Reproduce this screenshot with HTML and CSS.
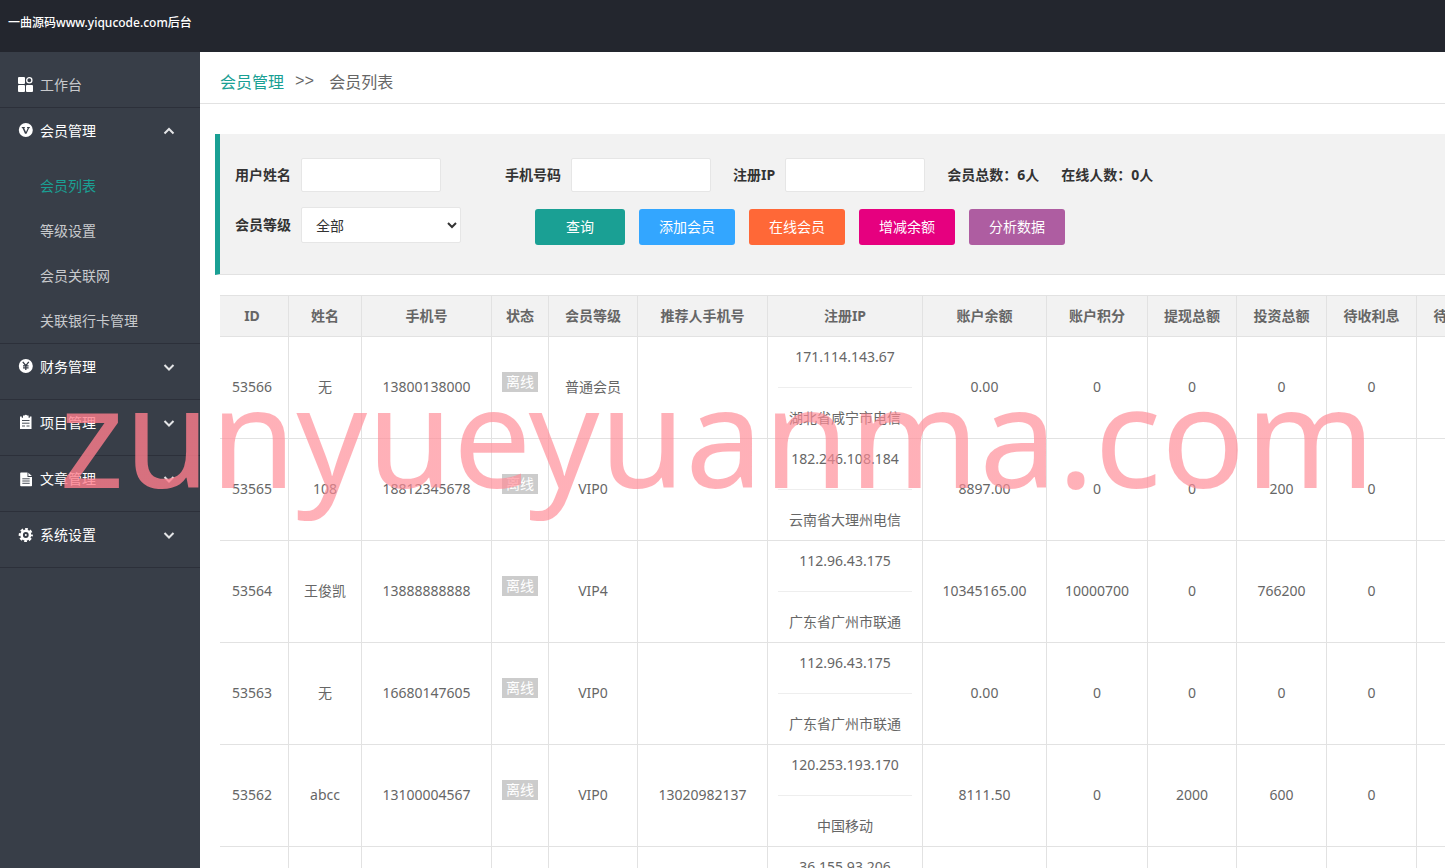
FILE: index.html
```html
<!DOCTYPE html>
<html lang="zh-CN">
<head>
<meta charset="utf-8">
<title>会员列表</title>
<link rel="stylesheet" href="styles.css">
</head>
<body>
<div class="app">
  <header class="topbar">一曲源码www.yiqucode.com后台</header>
  <div class="body">
    <nav class="sidebar">
      <div class="nav-group">
        <a class="nav-link" href="#">
          <svg class="icon raised" viewBox="0 0 16 16"><rect x="0" y="1" width="7" height="7" rx="1"/><rect x="0" y="9" width="7" height="7" rx="1"/><rect x="8" y="9" width="7" height="7" rx="1"/><circle cx="11.3" cy="4.2" r="2.6" fill="none" stroke="currentColor" stroke-width="1.3"/></svg>
          <span>工作台</span>
        </a>
      </div>
      <div class="nav-group nav-parent">
        <button class="nav-link" type="button" aria-expanded="true">
          <svg class="icon raised" viewBox="0 0 16 16"><circle cx="7.8" cy="8" r="7"/><path d="M3.800 5h3v1l-.6.200 1.800 3.800 1.700-3.800-.6-.2V5h2.700v1l-.8.300L8.500 11.800H7L4.600 6.200 3.800 6z" fill="#383e48"/></svg>
          <span>会员管理</span>
          <svg class="chevron" viewBox="0 0 12 12"><path d="M1.500 8.500 6 4l4.500 4.500"/></svg>
        </button>
        <ul class="subnav">
          <li><a class="active" href="#">会员列表</a></li>
          <li><a href="#">等级设置</a></li>
          <li><a href="#">会员关联网</a></li>
          <li><a href="#">关联银行卡管理</a></li>
        </ul>
      </div>
      <div class="nav-group nav-parent">
        <button class="nav-link" type="button" aria-expanded="false">
          <svg class="icon raised" viewBox="0 0 16 16"><circle cx="7.800" cy="8" r="7"/><path d="M4.800 3.800 7.800 7.600l3-3.800M7.800 7.600V12M5 7.800h5.600M5 9.900h5.600" fill="none" stroke="#383e48" stroke-width="1.300"/></svg>
          <span>财务管理</span>
          <svg class="chevron" viewBox="0 0 12 12"><path d="M1.500 4 6 8.500 10.500 4"/></svg>
        </button>
      </div>
      <div class="nav-group nav-parent">
        <button class="nav-link" type="button" aria-expanded="false">
          <svg class="icon raised" viewBox="0 0 16 16"><path d="M2 2.500h1.800v1.300h1.200V1.600h1.500a1.400 1.400 0 0 1 2.600 0h1.500v2.200h1.200V2.500H13.500V15H2z"/><path d="M4 6.500h7.500M4 9.200h7.500M4 12h3M8.500 12h3" fill="none" stroke="#383e48" stroke-width=".9"/></svg>
          <span>项目管理</span>
          <svg class="chevron" viewBox="0 0 12 12"><path d="M1.500 4 6 8.500 10.500 4"/></svg>
        </button>
      </div>
      <div class="nav-group nav-parent">
        <button class="nav-link" type="button" aria-expanded="false">
          <svg class="icon" viewBox="0 0 16 16"><path d="M3 1.500h6.500V6H14v8.500q0 .7-.7.700H3q-.8 0-.8-.7V2.200q0-.7.800-.7z"/><path d="M10.400 1.700 13.800 5.100h-3.400z"/><path d="M4.300 7.800h7.400M4.300 10h7.400M4.300 12.300h7.400" fill="none" stroke="#383e48" stroke-width=".9"/></svg>
          <span>文章管理</span>
          <svg class="chevron" viewBox="0 0 12 12"><path d="M1.500 4 6 8.500 10.500 4"/></svg>
        </button>
      </div>
      <div class="nav-group nav-parent">
        <button class="nav-link" type="button" aria-expanded="false">
          <svg class="icon" viewBox="0 0 16 16"><circle cx="7.800" cy="8" r="4.200" fill="none" stroke="currentColor" stroke-width="2.600"/><circle cx="7.800" cy="8" r="6" fill="none" stroke="currentColor" stroke-width="2.200" stroke-dasharray="2.700 2.012" stroke-dashoffset="1.350"/><circle cx="7.800" cy="8" r="1"/></svg>
          <span>系统设置</span>
          <svg class="chevron" viewBox="0 0 12 12"><path d="M1.500 4 6 8.500 10.500 4"/></svg>
        </button>
      </div>
    </nav>

    <main class="main">
      <div class="crumbs">
        <a href="#">会员管理</a><span class="sep">&gt;&gt;</span><span>会员列表</span>
      </div>

      <form class="filters">
        <div class="filter-row">
          <div class="field wide"><label for="name">用户姓名</label><input id="name" type="text"></div>
          <div class="field"><label for="phone">手机号码</label><input id="phone" type="text"></div>
          <div class="field"><label for="ip">注册IP</label><input id="ip" type="text"></div>
          <span class="stat">会员总数：6人</span>
          <span class="stat">在线人数：0人</span>
        </div>
        <div class="filter-row actions">
          <div class="field">
            <label for="level">会员等级</label>
            <select id="level"><option>全部</option></select>
          </div>
          <div class="buttons">
            <button class="btn search" type="button">查询</button>
            <button class="btn add" type="button">添加会员</button>
            <button class="btn online" type="button">在线会员</button>
            <button class="btn balance" type="button">增减余额</button>
            <button class="btn analyse" type="button">分析数据</button>
          </div>
        </div>
      </form>

      <table class="members">
        <colgroup>
          <col class="c-id"><col class="c-name"><col class="c-phone"><col class="c-state"><col class="c-num"><col class="c-phone"><col class="c-ip"><col class="c-balance"><col class="c-points"><col class="c-num"><col class="c-sum"><col class="c-sum"><col class="c-sum">
        </colgroup>
        <thead>
          <tr><th>ID</th><th>姓名</th><th>手机号</th><th>状态</th><th>会员等级</th><th>推荐人手机号</th><th>注册IP</th><th>账户余额</th><th>账户积分</th><th>提现总额</th><th>投资总额</th><th>待收利息</th><th>待收本金</th></tr>
        </thead>
        <tbody>
          <tr><td>53566</td><td>无</td><td>13800138000</td><td class="state"><span class="badge">离线</span></td><td>普通会员</td><td></td><td class="ip">171.114.143.67<hr>湖北省咸宁市电信</td><td>0.00</td><td>0</td><td>0</td><td>0</td><td>0</td><td></td></tr>
          <tr><td>53565</td><td>108</td><td>18812345678</td><td class="state"><span class="badge">离线</span></td><td>VIP0</td><td></td><td class="ip">182.246.108.184<hr>云南省大理州电信</td><td>8897.00</td><td>0</td><td>0</td><td>200</td><td>0</td><td></td></tr>
          <tr><td>53564</td><td>王俊凯</td><td>13888888888</td><td class="state"><span class="badge">离线</span></td><td>VIP4</td><td></td><td class="ip">112.96.43.175<hr>广东省广州市联通</td><td>10345165.00</td><td>10000700</td><td>0</td><td>766200</td><td>0</td><td></td></tr>
          <tr><td>53563</td><td>无</td><td>16680147605</td><td class="state"><span class="badge">离线</span></td><td>VIP0</td><td></td><td class="ip">112.96.43.175<hr>广东省广州市联通</td><td>0.00</td><td>0</td><td>0</td><td>0</td><td>0</td><td></td></tr>
          <tr><td>53562</td><td>abcc</td><td>13100004567</td><td class="state"><span class="badge">离线</span></td><td>VIP0</td><td>13020982137</td><td class="ip">120.253.193.170<hr>中国移动</td><td>8111.50</td><td>0</td><td>2000</td><td>600</td><td>0</td><td></td></tr>
          <tr><td></td><td></td><td></td><td></td><td></td><td></td><td class="ip">36.155.93.206<hr></td><td></td><td></td><td></td><td></td><td></td><td></td></tr>
        </tbody>
      </table>
    </main>
  </div>
  <div class="watermark">zunyueyuanma.com</div>
</div>
</body>
</html>
```
FILE: styles.css
```css
* { box-sizing: border-box; }

body {
  margin: 0;
  font: 14px/20px "Noto Sans", "Noto Sans CJK SC", sans-serif;
  color: #666;
  background: #fff;
}

a { color: inherit; text-decoration: none; }

input, select, button { font: inherit; margin: 0; }

.app {
  position: relative;
  display: flex;
  flex-direction: column;
  height: 100vh;
  overflow: hidden;
}

.topbar {
  flex: none;
  height: 52px;
  padding: 13px 8px;
  background: #23262e;
  color: #fff;
  font-size: 12px;
  font-weight: 500;
}

.body { display: flex; flex: 1; min-height: 0; }

/* Sidebar */
.sidebar {
  flex: none;
  width: 200px;
  padding-top: 10px;
  background: #383e48;
  color: #fff;
}

.nav-group { border-bottom: 1px solid #2c303a; }
.nav-parent { padding-bottom: 10px; }
.nav-parent:has(.subnav) { padding-bottom: 0; }

.nav-link {
  display: flex;
  align-items: center;
  gap: 6px;
  width: 100%;
  height: 45px;
  padding: 0 25px 0 18px;
  border: 0;
  background: none;
  color: #fff;
  text-align: left;
}

a.nav-link { color: #c8cacd; }

.icon { width: 16px; height: 16px; fill: currentColor; color: #fff; }
.icon.raised { margin-bottom: 2px; }

.chevron {
  width: 12px;
  height: 12px;
  margin-left: auto;
  fill: none;
  stroke: #e4e5e7;
  stroke-width: 2;
}

.subnav { margin: 10px 0 0; padding: 0; list-style: none; }
.subnav a { display: block; padding-left: 40px; line-height: 45px; color: #c8cacd; }
.subnav .active { color: #1aa094; }

/* Content */
.main { flex: 1; min-width: 0; overflow: hidden; }

.crumbs {
  display: flex;
  align-items: center;
  height: 52px;
  padding: 9px 20px 0;
  border-bottom: 1px solid #e2e2e2;
  font-size: 16px;
}
.crumbs a { color: #1aa094; }
.crumbs .sep { margin: 0 15px 0 11px; font-family: "Liberation Mono", monospace; }

.filters {
  margin: 30px 0 20px 15px;
  padding: 24px 15px 29px;
  border-left: 5px solid #1aa094;
  border-bottom: 1px solid #e2e2e2;
  background: #f2f2f2;
  color: #333;
}

.filter-row { display: flex; align-items: center; gap: 22px; white-space: nowrap; }
.filter-row.actions { gap: 74px; height: 38px; margin-top: 15px; }

.field { display: flex; align-items: center; gap: 10px; }
.field.wide { margin-right: 42px; }
.field label, .stat { font-weight: 700; }

.field input, .field select {
  border: 1px solid #e6e6e6;
  border-radius: 2px;
  background: #fff;
  color: #333;
}
.field input { width: 140px; height: 34px; padding: 0 10px; }
.field select { width: 160px; height: 36px; padding: 0 0 0 10px; }

.actions .field { align-self: flex-start; }
.buttons { display: flex; gap: 14px; align-self: flex-end; }

.btn {
  width: 96px;
  height: 36px;
  padding: 0;
  border: 0;
  border-radius: 3px;
  color: #fff;
}
.btn.search { width: 90px; background: #1aa094; }
.btn.add { background: #33a6ff; }
.btn.online { background: #ff6837; }
.btn.balance { background: #e6007f; }
.btn.analyse { background: #ae5da1; }

/* Member table */
.members {
  width: 1287px;
  margin-left: 20px;
  table-layout: fixed;
  border-collapse: separate;
  border-spacing: 0;
  border-top: 1px solid #e2e2e2;
  text-align: center;
}
.members th, .members td {
  padding: 10px;
  border-right: 1px solid #e2e2e2;
  border-bottom: 1px solid #e2e2e2;
  white-space: nowrap;
}
.members th { background: #f2f2f2; font-weight: 700; }
.members td { padding-bottom: 12px; }
.members th:first-child, .members td:first-child { padding-right: 14px; }
.members .ip { padding-bottom: 10px; }
.members .state { padding-bottom: 22px; }
.members hr { margin: 20px 0; border: 0; border-top: 1px solid #eee; }

.c-id { width: 69px; }
.c-name { width: 73px; }
.c-phone { width: 130px; }
.c-state { width: 57px; }
.c-num { width: 89px; }
.c-ip { width: 155px; }
.c-balance { width: 124px; }
.c-points { width: 101px; }
.c-sum { width: 90px; }

.badge {
  display: block;
  width: 36px;
  background: #ccc;
  color: #fff;
}

/* The tint is denser over the 200px sidebar than over the white page */
.watermark {
  position: absolute;
  left: 0;
  top: 344px;
  padding: 20px 0 20px 59px;
  background: linear-gradient(90deg, rgba(255, 126, 141, 0.8) 200px, rgba(255, 139, 150, 0.68) 200px);
  background-clip: text;
  color: transparent;
  font-size: 139px;
  line-height: 140px;
  white-space: nowrap;
  pointer-events: none;
}
```
